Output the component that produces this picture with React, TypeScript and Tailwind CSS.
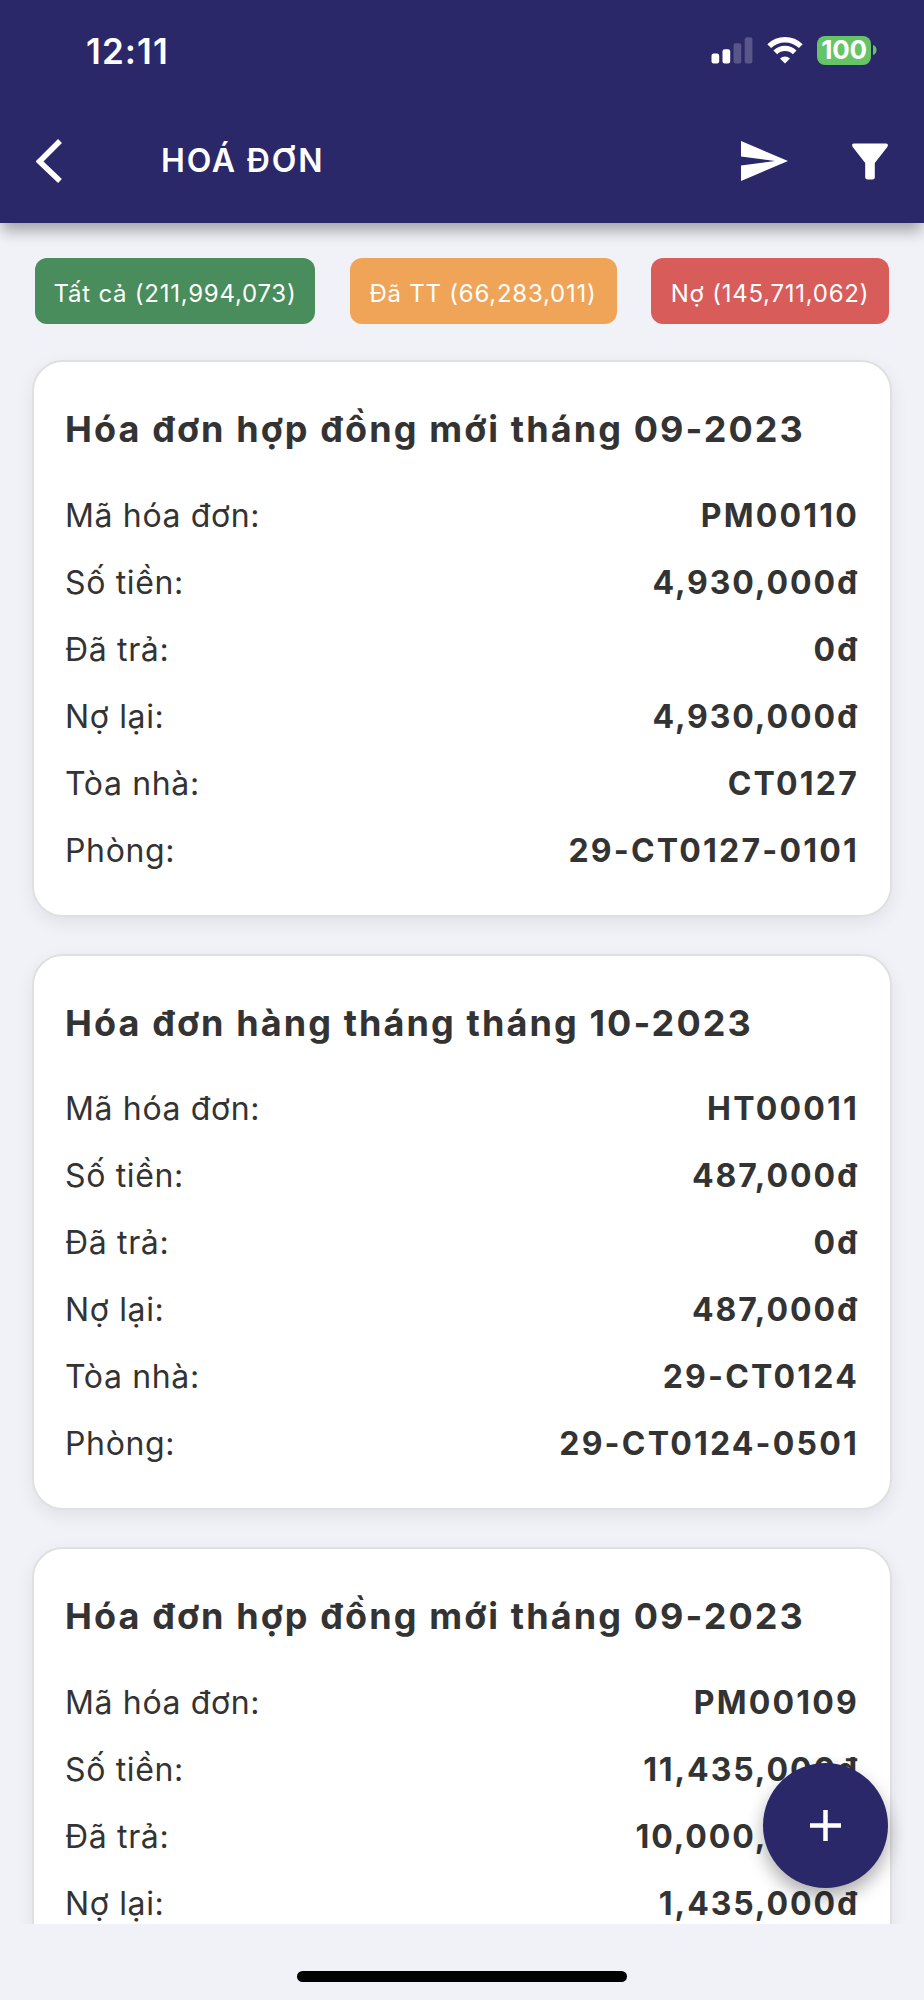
import React from "react";

type Invoice = { title: string; values: string[] };

const labels = ["Mã hóa đơn:", "Số tiền:", "Đã trả:", "Nợ lại:", "Tòa nhà:", "Phòng:"];

const invoices: Invoice[] = [
  {
    title: "Hóa đơn hợp đồng mới tháng 09-2023",
    values: ["PM00110", "4,930,000đ", "0đ", "4,930,000đ", "CT0127", "29-CT0127-0101"],
  },
  {
    title: "Hóa đơn hàng tháng tháng 10-2023",
    values: ["HT00011", "487,000đ", "0đ", "487,000đ", "29-CT0124", "29-CT0124-0501"],
  },
  {
    title: "Hóa đơn hợp đồng mới tháng 09-2023",
    values: ["PM00109", "11,435,000đ", "10,000,000đ", "1,435,000đ", "CT0127", "29-CT0127-0101"],
  },
];

function StatusBar() {
  return (
    <div className="flex h-[100px] items-center justify-between pr-[47px] pl-[86px]">
      <div className="pt-px text-[35px] leading-[40px] font-semibold tracking-[1.1px]">12:11</div>
      <div className="flex items-center">
        <svg className="mr-[14px] h-[28px] w-[42px]" viewBox="0 0 42 28" fill="#fff">
          <rect x="0.5" y="17.5" width="7.7" height="10" rx="2.2" />
          <rect x="11.5" y="13.2" width="7.7" height="14.3" rx="2.2" />
          <rect x="22.6" y="7.2" width="7.7" height="20.3" rx="2.2" opacity="0.22" />
          <rect x="33.7" y="1.2" width="7.7" height="26.3" rx="2.2" opacity="0.22" />
        </svg>
        <svg className="mr-[14px] h-[27px] w-[36px]" viewBox="0 0 36 27" fill="none" stroke="#fff" strokeWidth="5.3">
          <path d="M2.2 9.2a22.6 22.6 0 0 1 31.6 0" />
          <path d="M8.3 15.4a13.8 13.8 0 0 1 19.4 0" />
          <path d="M18 26.6l-5-5.1a7.6 7.6 0 0 1 10 0z" fill="#fff" stroke="none" />
        </svg>
        <div className="mr-[2px] flex h-[29px] w-[54px] items-center justify-center rounded-[8px] bg-[#65c466] text-[26px] leading-none font-bold tracking-[-0.3px]">
          100
        </div>
        <svg className="h-[10px] w-[4px]" viewBox="0 0 4 10" fill="#65c466">
          <path d="M0 0C4.8 1.4 4.8 8.6 0 10z" />
        </svg>
      </div>
    </div>
  );
}

function Header() {
  return (
    <header className="relative z-10 h-[223px] shrink-0 bg-[#2b2869] text-white shadow-[0_10px_14px_-2px_rgba(0,0,0,0.32)]">
      <StatusBar />
      <div className="flex h-[122px] items-center pr-[36px] pl-[36px]">
        <svg className="h-[44px] w-[26px]" viewBox="0 0 26 44" fill="none" stroke="#fff" strokeWidth="5.5">
          <path d="M24 2L3.5 22.5L24 42" />
        </svg>
        <h1 className="ml-[99px] text-[32px] leading-[40px] font-semibold tracking-[1.8px]">HOÁ ĐƠN</h1>
        <svg className="ml-auto h-[40px] w-[47px]" viewBox="0 0 47 40" fill="#fff">
          <path d="M0 0L47 20L0 40V24.5L34 20L0 15.5Z" />
        </svg>
        <svg className="ml-[64px] h-[37px] w-[36px]" viewBox="0 0 36 37" fill="#fff">
          <path d="M1.8 0.5H34.2Q37 1 35.3 4L22.8 20V34Q22.8 36.5 20.3 36.5H15.7Q13.2 36.5 13.2 34V20L0.7 4Q-1 1 1.8 0.5Z" />
        </svg>
      </div>
    </header>
  );
}

function Filters() {
  return (
    <div className="flex justify-between pr-[35px] pl-[35px] text-[24px] leading-[64px] font-normal tracking-[0.75px] whitespace-nowrap text-white">
      <button className="h-[66px] w-[280px] rounded-[12px] bg-[#488d5b] pt-[4px]">Tất cả (211,994,073)</button>
      <button className="h-[66px] w-[267px] rounded-[12px] bg-[#f0a457] pt-[4px]">Đã TT (66,283,011)</button>
      <button className="h-[66px] w-[238px] rounded-[12px] bg-[#d85d5a] pt-[4px]">Nợ (145,711,062)</button>
    </div>
  );
}

function Card({ invoice }: { invoice: Invoice }) {
  return (
    <section className="mb-[37px] h-[556.6px] shrink-0 rounded-[31px] border-2 border-[#e0e0e0] bg-white pt-[42px] pr-[31px] pl-[31px] text-[#333] shadow-[0_6px_18px_rgba(0,0,0,0.07)]">
      <h2 className="mb-[28px] text-[36px] leading-[50px] font-bold tracking-[2.1px] whitespace-nowrap">{invoice.title}</h2>
      {labels.map((label, i) => {
        const value = invoice.values[i];
        return (
          <div key={label} className="flex h-[67px] items-center justify-between text-[32px] leading-[40px]">
            <span className="font-normal tracking-[0.65px]">{label}</span>
            <span className={value.endsWith("đ") ? "font-bold tracking-[1.9px]" : "font-bold tracking-[2.2px]"}>{value}</span>
          </div>
        );
      })}
    </section>
  );
}

export default function App() {
  return (
    <div className="relative flex h-[2000px] w-[924px] flex-col overflow-hidden bg-[#f1f2f7] font-['Inter',sans-serif]">
      <Header />
      <main className="flex h-[1701px] shrink-0 flex-col overflow-hidden pt-[35px]">
        <Filters />
        <div className="mt-[36px] flex flex-col px-[32px]">
          {invoices.map((invoice, i) => (
            <Card key={i} invoice={invoice} />
          ))}
        </div>
      </main>
      <footer className="flex flex-1 justify-center pt-[47px]">
        <div className="h-[11px] w-[330px] rounded-full bg-black" />
      </footer>
      <button className="absolute top-[1763px] left-[763px] flex h-[125px] w-[125px] items-center justify-center rounded-full bg-[#2b2869] shadow-[0_9px_18px_rgba(0,0,0,0.32)]">
        <svg className="h-[31px] w-[31px]" viewBox="0 0 31 31" stroke="#fff" strokeWidth="4.5">
          <path d="M15.5 0V31M0 15.5H31" />
        </svg>
      </button>
    </div>
  );
}
